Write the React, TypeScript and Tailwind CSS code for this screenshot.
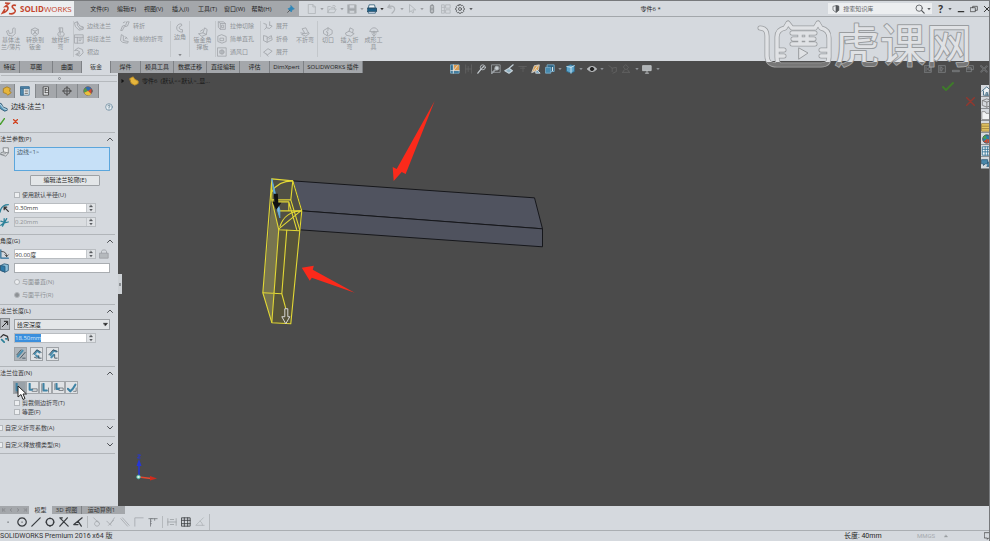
import React from 'react';
import clsx from 'clsx';

type IconProps = { className?: string; children: React.ReactNode };

function Icon({ className = 'w-3 h-3', children }: IconProps) {
  return (
    <svg
      viewBox="0 0 12 12"
      className={clsx('shrink-0', className)}
      fill="none"
      stroke="currentColor"
      strokeLinecap="round"
      strokeLinejoin="round"
      aria-hidden="true"
    >
      {children}
    </svg>
  );
}

const Caret = ({ className = 'text-[#5c5f63]' }: { className?: string }) => (
  <Icon className={clsx('w-1 h-1', className)}>
    <path d="M1 3h10L6 10z" fill="currentColor" stroke="none" />
  </Icon>
);

/* sheet metal commands */
const glyphs: Record<string, React.ReactNode> = {
  base: <path d="M1 5l2-1 1 4 4-1V2l2-1 1 1v6l-3 3-5-1z" />,
  convert: <path d="M2 3l4-2 4 2v5l-4 3-4-3zM2 3l4 2 4-2M6 5v3M4 8l2-2 2 2" />,
  loft: <path d="M4 1h4v5l2 2-1 3H3L2 8l2-2zM4 6h4M5 2v7" />,
  edge: <path d="M1 2l3-1 3 5 4 1v3l-5 1-4-4zM4 1v4l3 4M7 9l4-1" />,
  miter: <path d="M1 1h10v10H1zM1 4h10M4 4v7M6 6h3M6 8h2" />,
  hem: <path d="M1 4l4-3 5 2 1 4-4 4-5-2 5-3-3-2zM4 9l3-1" />,
  jog: <path d="M1 11l2-5 4-1 1-4h3L9 6 5 7l-2 4zM4 2l2-1" />,
  sketch: <path d="M2 1l2 1v6l6 1-1 2-6-1-2-2zM6 3l3 3M6 6l2-2" />,
  corner: <path d="M7 1C4 1 2 3 2 6s3 5 7 5V8C6 8 5 7 5 5l3-2z" />,
  gusset: <path d="M1 8l5-1 2-6 3 2-1 6-5 2zM6 7l4 2M3 5l3-2" />,
  cut: <path d="M2 1h6l2 2v7H4L2 8zM2 1l2 2v7M4 3h6M6 5h2v3H6z" />,
  hole: <path d="M6 1l5 2v6l-5 2-5-2V3zM4 5h4v3H4z" />,
  vent: <path d="M1 1h10v10H1zM6 3v6M3 6h6M4 4h4v4H4z" />,
  unfold: <path d="M1 3l3 1v4l4 1 3-3-3-1M4 8l-2 2M8 1v4" />,
  fold: <path d="M1 2l4 1v7L1 8zM5 5l5-3 1 5-6 3M7 6l2-1" />,
  flatten: <path d="M1 6l5-4 5 3-5 4zM4 9l2 2" />,
  nobend: <path d="M3 2l4-1 2 4 2 3-4 3-5-2 3-2zM1 7l5 1 4-1" />,
  rip: <path d="M1 4l5-3 5 3v4l-5 3-5-3zM6 1v3L4 6l2 1-1 3" />,
  insert: <path d="M1 7l4-2 1-4 4 2-1 4 2 1-4 3-5-1zM5 5l4 2" />,
  form: <path d="M1 5c1-3 3-4 5-4s4 1 5 4zM6 5v6M4 9l2 2 2-2M3 7h6" />,
};

function BigCommand({ icon, lines, className }: { icon: string; lines: string[]; className: string }) {
  return (
    <button className={clsx('flex flex-col items-center pt-[10px] shrink-0', className)}>
      <Icon className="w-[10px] h-[10px] text-[#a1a5a9]">{glyphs[icon]}</Icon>
      {lines.map((line) => (
        <span key={line} className="leading-[7px] whitespace-nowrap">
          {line}
        </span>
      ))}
    </button>
  );
}

function CommandList({ items, className }: { items: [string, string][]; className: string }) {
  return (
    <div className={clsx('flex flex-col justify-between py-1 shrink-0', className)}>
      {items.map(([icon, label], i) => (
        <button key={i} className="flex items-center gap-[3px] h-[10px] whitespace-nowrap">
          <Icon className="w-[10px] h-[10px] text-[#a1a5a9]">{glyphs[icon]}</Icon>
          {label}
        </button>
      ))}
    </div>
  );
}

const menus = ['文件(F)', '编辑(E)', '视图(V)', '插入(I)', '工具(T)', '窗口(W)', '帮助(H)'];

function TitleBar() {
  return (
    <header className="flex items-center h-4 shrink-0 border-b border-[#a3a7ab]">
      <div className="flex items-center w-[74px] h-full bg-[#eceef0] shrink-0 text-[8px] text-[#c4452d]">
        <svg viewBox="0 0 20 16" className="w-5 h-4" fill="none" stroke="#c4452d" strokeWidth="1.6" aria-hidden="true">
          <path d="M5 2l4 .4-3.500 3c4-.6 3.500 4.600-3 6.600L5 8" />
          <path d="M16 4.500c-3-1-5 .5-3 2.500s3.500 3 1 5c-1.500 1-3.500 1-5 .5" />
        </svg>
        <span className="font-bold">SOLID</span>
        <span>WORKS</span>
      </div>
      <nav className="flex items-center w-[225px] h-full pl-3 bg-[#a4a7ab] shrink-0 text-[#222]">
        {menus.map((m) => (
          <button key={m} className="w-[27px] text-center whitespace-nowrap">
            {m}
          </button>
        ))}
        <Icon className="w-2 h-2 ml-3 text-[#2e86b8]">
          <path d="M6 1l5 5-2 .5-2 2-.5 2L1.500 5.500l2-.5 2-2z" fill="currentColor" />
          <path d="M4 8l-3 3" stroke="#333" />
        </Icon>
      </nav>
      <div className="flex items-center pl-2 shrink-0 text-[#b0b4b8]">
        <Tool><path d="M2 .5h5l3 3v8H2zM7 .5v3h3" /></Tool>
        <Tool><path d="M1 10V3h3l1 1h4v2M1 10l2-4h8l-2 4zM7 2c2-1 3 0 3 1" /></Tool>
        <Tool>
          <path d="M1 1h10v10H1z" fill="#a3a7ab" />
          <path d="M3 1h6v4H3zM3 8h6v3H3z" fill="#d5d9de" />
        </Tool>
        <Tool dark>
          <path d="M3 1h6l1 4H2z" fill="#f3f5f6" stroke="#34607a" />
          <path d="M.5 5h11v4H.5z" fill="#1d5f87" stroke="#1d4159" />
          <path d="M2 9h8v2H2z" fill="#eef" stroke="#34607a" />
        </Tool>
        <Tool><path d="M3 1L1 4l4 1M1 4c4-3 9-1 8 3-.5 2-2 3-3 4" strokeWidth="1.500" /></Tool>
        <Tool><path d="M3 1v9l2-2 2 3 1-1-1-3h3z" /></Tool>
        <Icon className="w-[10px] h-[10px] mr-1">
          <rect x="4" y="1" width="4" height="10" rx="2" fill="#a3a7ab" stroke="#8b8f93" />
          <path d="M6 3v1M6 8v1" stroke="#e6e8ea" />
        </Icon>
        <Icon className="w-[10px] h-[10px] mr-1"><path d="M1 1h3v10H1zM6 1h5v4H6zM6 7h5v4H6zM1 4h3M1 8h3" /></Icon>
        <Icon className="w-[10px] h-[10px] mr-1 text-[#505356]">
          <path d="M5 .8h2l.5 1.300 1.500-.5 1.400 1.400-.5 1.500 1.300.5v2l-1.300.5.5 1.500L9 10.400l-1.500-.5-.5 1.300H5l-.5-1.300-1.500.5L1.600 9l.5-1.500L.8 7V5l1.300-.5L1.600 3 3 1.600l1.500.5z" />
          <circle cx="6" cy="6" r="1.800" />
        </Icon>
        <Caret />
      </div>
      <div className="flex-1 text-center text-[#222]">零件6 *</div>
      <label className="flex items-center h-[11px] w-[104px] mr-1.5 pl-1 pr-px bg-[#eceef0] shrink-0">
        <Icon className="w-2 h-2 text-[#55585c]">
          <path d="M2 2l4-1 4 1v6l-4 3-4-3z" />
          <path d="M6 1v10l4-3V2z" fill="currentColor" />
        </Icon>
        <input
          aria-label="搜索知识库"
          placeholder="搜索知识库"
          className="flex-1 min-w-0 pl-[3px] bg-transparent outline-none placeholder:text-[#606366]"
        />
        <Icon className="w-[10px] h-[10px] text-[#55585c]">
          <circle cx="5" cy="5" r="3.800" />
          <path d="M8 8l3 3" strokeWidth="1.500" />
        </Icon>
        <Caret className="ml-[2px] text-[#5c5f63]" />
      </label>
      <div className="flex items-center gap-[5px] shrink-0 text-[#333]">
        <button className="text-[10px] font-bold leading-3">?</button>
        <Caret />
        <Icon className="w-2 h-2"><path d="M2 10h8" strokeWidth="2" /></Icon>
        <Icon className="w-2 h-2"><path d="M1 4h7v6H1zM4 4V2h7v6H8" /></Icon>
        <Icon className="w-2 h-2 -mr-[2px]"><path d="M2 2l8 8M10 2l-8 8" strokeWidth="1.500" /></Icon>
      </div>
    </header>
  );
}

function Tool({ children, dark }: { children: React.ReactNode; dark?: boolean }) {
  return (
    <button className="flex items-center gap-[3px] w-5 h-3">
      <Icon className="w-[10px] h-[10px]">{children}</Icon>
      <Caret className={dark ? 'text-[#333]' : 'text-[#9a9da1]'} />
    </button>
  );
}

const Rule = () => <div className="w-px my-1 bg-[#c3c7cb] shrink-0" />;

function Ribbon() {
  return (
    <div className="flex h-11 shrink-0 text-[#8f9397]">
      <BigCommand icon="base" lines={['基体法', '兰/薄片']} className="w-[22px]" />
      <BigCommand icon="convert" lines={['转换到', '钣金']} className="w-[26px]" />
      <BigCommand icon="loft" lines={['放样折', '弯']} className="w-[25px]" />
      <Rule />
      <CommandList className="w-[46px]" items={[['edge', '边线法兰'], ['miter', '斜接法兰'], ['hem', '褶边']]} />
      <div className="w-[50px] py-1 shrink-0">
        <button className="flex items-center gap-[3px] h-[10px]">
          <Icon className="w-[10px] h-[10px] text-[#a1a5a9]">{glyphs.jog}</Icon>转折
        </button>
        <button className="flex items-center gap-[3px] h-[10px] mt-[3px]">
          <Icon className="w-[10px] h-[10px] text-[#a1a5a9]">{glyphs.sketch}</Icon>绘制的折弯
        </button>
      </div>
      <Rule />
      <button className="flex flex-col items-center w-[18px] pt-[6px] shrink-0">
        <Icon className="w-[10px] h-[10px] text-[#a1a5a9]">{glyphs.corner}</Icon>
        <span className="leading-[8px]">边角</span>
        <Caret className="mt-3 text-[#85888c]" />
      </button>
      <Rule />
      <BigCommand icon="gusset" lines={['钣金角', '撑板']} className="w-[25px]" />
      <Rule />
      <CommandList className="w-[44px] pl-[1px]" items={[['cut', '拉伸切除'], ['hole', '简单直孔'], ['vent', '通风口']]} />
      <Rule />
      <CommandList className="w-[32px] pl-[2px]" items={[['unfold', '展开'], ['fold', '折叠'], ['flatten', '展开']]} />
      <BigCommand icon="nobend" lines={['不折弯']} className="w-[24px]" />
      <Rule />
      <BigCommand icon="rip" lines={['切口']} className="w-[20px]" />
      <BigCommand icon="insert" lines={['插入折', '弯']} className="w-[23px]" />
      <BigCommand icon="form" lines={['成形工', '具']} className="w-[25px]" />
    </div>
  );
}

const ribbonTabs = [
  ['特征', 'w-[20px]'],
  ['草图', 'w-[33px]'],
  ['曲面', 'w-[29px]'],
  ['钣金', 'w-[29px]'],
  ['焊件', 'w-[30px]'],
  ['模具工具', 'w-[33px]'],
  ['数据迁移', 'w-[33px]'],
  ['直接编辑', 'w-[33px]'],
  ['评估', 'w-[30px]'],
  ['DimXpert', 'w-[34px]'],
  ['SOLIDWORKS 插件', 'w-[59px]'],
];

function TabRow() {
  return (
    <div className="flex h-3 shrink-0 bg-[#4b4b4b]">
      {ribbonTabs.map(([label, width]) => (
        <button
          key={label}
          className={clsx(
            'shrink-0 whitespace-nowrap border-r border-[#7e8185]',
            width,
            label === '钣金' ? 'bg-[#d5d9de] text-[#444]' : 'bg-[#a4a7ab] text-[#1f1f1f]'
          )}
        >
          {label}
        </button>
      ))}
      <div className="flex items-center justify-between w-[210px] h-4 ml-[87px] shrink-0 text-[#8b8f93] z-10">
        <Icon className="w-[10px] h-[10px]">
          <path d="M1 1h10v10H1z" fill="#2d6d91" stroke="#7fb1cc" />
          <path d="M4 1h7v7H4z" fill="#d99a4e" stroke="none" />
          <path d="M4 8l5-6M1 8h10M4 1v10" stroke="#e8e8e8" />
        </Icon>
        <Icon className="w-[10px] h-[10px] text-[#636363]"><path d="M2 1v10M2 6h7M9 1v10M5 3v6" /></Icon>
        <Icon className="w-[10px] h-[10px] text-[#c3c9ce]"><circle cx="7" cy="4" r="3" /><path d="M5 6l-4 5M6 5l2-2" strokeWidth="1.500" /></Icon>
        <Icon className="w-[10px] h-[10px] text-[#9ba0a4]"><path d="M1 1h10v9H1z" /><circle cx="7" cy="5" r="2.500" fill="#c5ccd0" /><path d="M5 7l-4 4" strokeWidth="2" /></Icon>
        <Icon className="w-[10px] h-[10px] text-[#c3d0d8]"><path d="M1 8l5-3 4 3-4 3zM6 5l5-4" fill="#8fb0c1" strokeWidth="1.500" /></Icon>
        <Icon className="w-[10px] h-[10px] text-[#626262]"><path d="M1 3h9M6 3v6M3 5h5" /></Icon>
        <Icon className="w-[10px] h-[10px]">
          <path d="M1 10l3-8 6-1-1 6z" fill="#e0a351" stroke="#cfd2d4" />
          <path d="M3 9l5-7M7 7l4 4H6z" fill="#6aa0c0" stroke="#e1e4e6" />
        </Icon>
        <Icon className="w-[10px] h-[10px] text-[#7fb1cc]"><path d="M3 1h8v8H3z" fill="#28607f" /><path d="M1 4h6v7H1z" fill="#478aae" /><path d="M9 4v4" stroke="#fff" /></Icon>
        <Caret className="text-[#8b8f93]" />
        <Icon className="w-[10px] h-[10px]"><path d="M1 3l4-2 5 1v7l-4 2-5-2z" fill="#5fa6cc" stroke="#2d6d91" /><path d="M1 3l5 1 4-2M6 4v7" stroke="#d8e8f0" /></Icon>
        <Caret className="text-[#8b8f93]" />
        <Icon className="w-[10px] h-[10px] text-[#c5c8ca]"><path d="M.5 6C3 2 9 2 11.500 6 9 10 3 10 .5 6z" fill="#aeb2b5" /><circle cx="6" cy="6" r="2" fill="#222" stroke="#222" /></Icon>
        <Caret className="text-[#8b8f93]" />
        <Icon className="w-[10px] h-[10px] text-[#656565]"><path d="M1 2l4 3v4M5 5l5-1v5l-4 2" /></Icon>
        <Icon className="w-[10px] h-[10px] text-[#656565]"><path d="M6 1l3 3-3 3-3-3zM2 10l2-3M10 10L8 7M2 10h8" /></Icon>
        <Caret className="text-[#8b8f93]" />
        <Icon className="w-[10px] h-[10px] text-[#c3c6c8]"><path d="M1 2h10v6H1z" fill="#aeb2b5" /><path d="M4 11h4M6 8v3" /></Icon>
        <Caret className="text-[#8b8f93]" />
      </div>
      <div className="flex items-center justify-end flex-1 gap-[6px] h-4 pr-[1px] text-[#8b8e91] z-10">
        <Icon className="w-2 h-2"><path d="M1 1h10v10H1zM9 3L5 6l4 3zM3 3v6" /></Icon>
        <Icon className="w-2 h-2"><path d="M1 1h10v10H1zM5 3l3 3-3 3zM3 3v6" /></Icon>
        <Icon className="w-2 h-2"><path d="M1 8h10v2H1z" /></Icon>
        <Icon className="w-2 h-2"><path d="M1 4h7v6H1zM4 4V1h7v6H8M1 6h7" /></Icon>
        <Icon className="w-2 h-2"><path d="M2 1l4 4 4-4 1 1-4 4 4 4-1 1-4-4-4 4-1-1 4-4-4-4z" /></Icon>
      </div>
    </div>
  );
}

function Section({ title, open = true, className, children }: { title: string; open?: boolean; className?: string; children?: React.ReactNode }) {
  return (
    <section className="mr-[3px] border-t border-[#b1b5b9]">
      <h3 className={clsx('flex items-center justify-between pr-[2px] text-[#333]', open ? 'h-3' : 'h-4')}>
        {open ? title : <Tick label={title} />}
        <Icon className="w-[6px] h-[6px] text-[#4c4f53]">
          <path d={open ? 'M1 9l5-5 5 5' : 'M1 3l5 5 5-5'} strokeWidth="2" />
        </Icon>
      </h3>
      {open && <div className={clsx('flex flex-col gap-1 pt-[2px]', className)}>{children}</div>}
    </section>
  );
}

function Tick({ label, type = 'checkbox', checked, muted }: { label: string; type?: 'checkbox' | 'radio'; checked?: boolean; muted?: boolean }) {
  return (
    <label className={clsx('flex items-center gap-[2px] h-[9px] whitespace-nowrap', muted ? 'text-[#8d9195]' : 'text-[#3d4043]')}>
      <input
        type={type}
        name={type === 'radio' ? 'angle' : undefined}
        disabled={muted}
        defaultChecked={checked}
        className={clsx(
          'appearance-none w-[6px] h-[6px] border border-[#b3b7bb] bg-[#eceef0] shrink-0 checked:bg-[#8d9195]',
          type === 'radio' && 'rounded-full'
        )}
      />
      {label}
    </label>
  );
}

function Spin({ label, value, icon, muted, selected, after }: {
  label: string;
  value: string;
  icon: React.ReactNode;
  muted?: boolean;
  selected?: boolean;
  after?: React.ReactNode;
}) {
  return (
    <div className="flex items-center h-[10px]">
      <div className="w-[14px] shrink-0">{icon}</div>
      <div className={clsx('flex items-center w-[82px] h-full border border-[#b9bdc1]', muted ? 'bg-[#dadde0]' : 'bg-white')}>
        {selected && <span className="h-full bg-[#3b8fdd] text-[#dcebfa] leading-[8px]">{value}</span>}
        <input
          aria-label={label}
          defaultValue={selected ? '' : value}
          disabled={muted}
          className={clsx('flex-1 min-w-0 h-full outline-none bg-transparent', muted ? 'text-[#8d9195]' : 'text-[#333]')}
        />
        <span className="flex flex-col justify-center w-[9px] h-full bg-[#dfe2e5] border-l border-[#c3c7cb]">
          <button aria-label="增加" className="flex justify-center h-1">
            <Icon className="w-1 h-1 text-[#55585c]"><path d="M1 9h10L6 3z" fill="currentColor" /></Icon>
          </button>
          <button aria-label="减少" className="flex justify-center h-1">
            <Caret />
          </button>
        </span>
      </div>
      {after}
    </div>
  );
}

/* [flange profile, reference line] */
const bendShapes = [
  ['M2 1v8h5', 'M1 11h10'],
  ['M2 1v7h3', 'M5 7h6v3H5'],
  ['M3 1v8h4', 'M9 6v5M1 1v10'],
  ['M3 1v6h3', 'M6 6h5v3H6M1 1v7'],
  ['M1 7l3 3 3-3 3-5', 'M8 10h3V6'],
];

const lengthShapes = [
  ['M2 9l6-7', 'M1 7l5-6M5 11l6-7M8 11h3'],
  ['M3 6l3-4 3 2M5 8l3 2', 'M1 6l5-5 5 3M3 10l3 1M8 8v3h3'],
  ['M3 7l4-5 3 1M7 7l-3 3', 'M1 7l5-6 5 2M8 7v4h3'],
];

function PropertyPanel() {
  return (
    <aside className="w-[118px] shrink-0 bg-[#d5d9de] overflow-hidden">
      <div className="flex items-center justify-center h-[11px] px-px">
        <div className="flex items-center justify-center w-full h-[7px] border-y border-[#b5b9bd]">
          <span className="block w-[3px] h-[3px] rounded-full border border-[#8b8f93]" />
        </div>
      </div>
      <div className="flex h-3.5 text-[#444]">
        <PanelTab><path d="M2 3l4-2 4 2-1 3 2 2-4 3-2-2-3-1z" fill="#e6b53c" stroke="#a77b1c" /></PanelTab>
        <PanelTab active>
          <path d="M1 1h10v10H1z" fill="#f2f5f7" stroke="#3e6f91" />
          <path d="M1 1h10v2H1zM1 3h3v8H1z" fill="#5089ad" stroke="#3e6f91" />
          <path d="M6 5h3M6 7h3M6 9h3" stroke="#666" />
        </PanelTab>
        <PanelTab><path d="M3 1h6v10H3zM5 3v5M5 5h3M5 8h3M5 3h2" fill="#e8eaec" /></PanelTab>
        <PanelTab><circle cx="6" cy="6" r="4" /><path d="M6 0v12M0 6h12" /></PanelTab>
        <PanelTab>
          <circle cx="6" cy="6" r="5" fill="#d14a35" stroke="#555" />
          <path d="M6 6L1.500 8A5 5 0 0 1 3 2z" fill="#4f9d4a" stroke="none" />
          <path d="M6 6L3 2a5 5 0 0 1 7 1z" fill="#2f6fb0" stroke="none" />
          <path d="M6 6l4 3.500A5 5 0 0 1 1.500 8z" fill="#e8c23c" stroke="none" />
        </PanelTab>
      </div>
      <div className="flex items-center h-[18px] pr-[5px] text-[7px] text-[#222]">
        <Icon className="w-2.5 h-2.5 -ml-[2px] mr-[3px]">
          <path d="M1 1l3 1 2 4 5 2v2l-3 1-5-3z" fill="#5c9dc0" stroke="#2b5570" />
          <path d="M3 3l4 5 3 1" stroke="#dcebf3" />
        </Icon>
        <h2 className="flex-1">边线-法兰1</h2>
        <Icon className="w-2 h-2 text-[#5d7f96]">
          <circle cx="6" cy="6" r="5" fill="#e6edf1" />
          <path d="M4.500 4.500c0-2 3-2 3 0 0 1-1.500 1-1.500 2.500M6 9v.2" stroke="#33566d" />
        </Icon>
      </div>
      <div className="flex items-center gap-2 h-2.5 mb-[6px]">
        <button aria-label="确定">
          <Icon className="w-[7px] h-[7px] -ml-[2px] text-[#4aa02f]"><path d="M1 7l3 4 7-10" strokeWidth="2.500" /></Icon>
        </button>
        <button aria-label="取消">
          <Icon className="w-[5px] h-[5px] text-[#d1421f]"><path d="M1 1l10 10M11 1L1 11" strokeWidth="3" /></Icon>
        </button>
      </div>

      <Section title="法兰参数(P)" className="pb-[7px]">
        <div className="flex">
          <Icon className="w-2.5 h-2.5 mr-1 text-[#7b7f83]"><path d="M4 1h6v6L7 11 1 9V7l3-1z" fill="#eceef0" /><path d="M4 6l6 1M1 9l6-1" /></Icon>
          <textarea
            aria-label="边线"
            defaultValue="边线<1>"
            className="w-[96px] h-6 px-[2px] resize-none outline-none overflow-hidden border border-[#5ba6dc] bg-[#c6e0f7] text-[#4a5a68] leading-[9px]"
          />
        </div>
        <button className="w-[70px] h-[11px] ml-[30px] rounded-[1px] border border-[#9da1a5] bg-[#e3e6e8] text-[#222] leading-[9px]">
          编辑法兰轮廓(E)
        </button>
        <div className="pl-[14px]"><Tick label="使用默认半径(U)" /></div>
        <Spin label="折弯半径" value="0.30mm" icon={<Icon className="w-2.5 h-2.5 text-[#333]"><path d="M0 11C1 5 4 2 10 2" stroke="#2c8199" strokeWidth="1.500" /><path d="M10 10L5 5M5 5h3M5 5v3" strokeWidth="1.500" /></Icon>} />
        <Spin label="缝隙距离" value="0.20mm" muted icon={<Icon className="w-2.5 h-2.5 text-[#2c8199]"><path d="M1 10l4-3V2M5 7l5-1M8 2L3 11M1 5l3 1" strokeWidth="1.500" /></Icon>} />
      </Section>

      <Section title="角度(G)" className="pb-[5px]">
        <Spin
          label="法兰角度"
          value="90.00度"
          icon={<Icon className="w-2.5 h-2.5 text-[#333]"><path d="M1 1v10h9" stroke="#2c6f99" strokeWidth="1.500" /><path d="M2 3c4 0 6 2 6 6M6 7l2 2 2-2" /></Icon>}
          after={
            <Icon className="w-2.5 h-2.5 ml-[3px] text-[#9a9ea2]"><path d="M3 5V3c0-2.500 6-2.500 6 0v2" /><path d="M1 5h10v6H1z" fill="#b5b9bd" /></Icon>
          }
        />
        <div className="flex items-center h-[10px]">
          <Icon className="w-2.5 h-2.5 mr-1"><path d="M1 3l4-2 5 1v7l-4 2-5-2z" fill="#8cc0dc" stroke="#2d5a78" /><path d="M1 3l5 1v7l-5-2z" fill="#2d7aa8" stroke="#2d5a78" /></Icon>
          <input aria-label="选择面" className="w-[96px] h-full border border-[#a9adb1] bg-white outline-none" />
        </div>
        <div className="pl-[14px]"><Tick type="radio" label="与面垂直(N)" muted /></div>
        <div className="pl-[14px]"><Tick type="radio" label="与面平行(R)" muted checked /></div>
      </Section>

      <Section title="法兰长度(L)" className="pb-[5px]">
        <div className="flex items-center h-[10px]">
          <button aria-label="反向" className="flex items-center justify-center w-[10px] h-3 mr-1 border border-[#85898d] bg-[#b9bec3] shrink-0">
            <Icon className="w-2 h-2 text-[#222]"><path d="M2 10l7-7M5 2h5v5" strokeWidth="1.500" /></Icon>
          </button>
          <div className="relative w-[96px] h-full">
            <select aria-label="长度终止条件" className="block w-full h-[11px] px-[2px] appearance-none border border-[#9da1a5] bg-[#e3e6e8] text-[#222] leading-[8px]">
              <option>给定深度</option>
            </select>
            <span className="absolute right-[2px] top-[3px] flex pointer-events-none">
              <Icon className="w-[5px] h-[5px] text-[#222]"><path d="M1 3h10L6 9z" fill="currentColor" /></Icon>
            </span>
          </div>
        </div>
        <Spin label="长度" value="18.50mm" selected icon={<Icon className="w-2.5 h-2.5 text-[#333]"><path d="M1 5l3-3 5 2 1 5" strokeWidth="1.500" /><path d="M2 8l3 3M7 7h1" stroke="#2c8199" strokeWidth="2" /></Icon>} />
        <div className="flex gap-[3px] pl-[14px]">
          {lengthShapes.map(([bar, line], i) => (
            <button
              key={bar}
              aria-label={`长度方式${i + 1}`}
              className={clsx('flex items-center justify-center w-[13px] h-3.5 border border-[#9ea2a6]', i === 0 ? 'bg-[#aeb5bb]' : 'bg-[#dfe2e5]')}
            >
              <Icon className="w-2.5 h-2.5">
                <path d={bar} stroke="#4b8eae" strokeWidth="2.500" />
                <path d={line} stroke="#3a4c58" />
              </Icon>
            </button>
          ))}
        </div>
      </Section>

      <Section title="法兰位置(N)" className="pb-[3px]">
        <div className="relative flex pl-[13px]">
          {bendShapes.map(([bar, line], i) => (
            <button
              key={bar}
              aria-label={`法兰位置${i + 1}`}
              className={clsx('flex items-center justify-center w-[13px] h-[13px] border border-[#a3a7ab]', i === 0 ? 'bg-[#99a1a8]' : 'bg-[#dfe2e5]')}
            >
              <Icon className="w-2.5 h-2.5">
                <path d={bar} stroke="#3f83a5" strokeWidth="2.500" />
                <path d={line} stroke="#6d7378" />
              </Icon>
            </button>
          ))}
          {/* mouse pointer */}
          <svg viewBox="0 0 10 16" className="absolute left-[17px] top-1 w-[10px] h-4 z-10" aria-hidden="true">
            <path d="M1 1v11l3-2.500 2 5 2-1-2-4.500h3.500z" fill="#fff" stroke="#222" />
          </svg>
        </div>
        <div className="pl-[14px]">
          <Tick label="剪裁侧边折弯(T)" />
          <Tick label="等距(F)" />
        </div>
      </Section>
      <div className="-ml-[3px]">
        <Section title="自定义折弯系数(A)" open={false} />
        <Section title="自定义释放槽类型(R)" open={false} />
        <div className="mr-[3px] border-t border-[#b1b5b9]" />
      </div>
    </aside>
  );
}

function PanelTab({ active, children }: { active?: boolean; children: React.ReactNode }) {
  return (
    <button
      className={clsx(
        'flex items-center justify-center w-[21px] border-r border-[#85898d] first:w-[15px]',
        active ? 'bg-[#d5d9de]' : 'bg-[#a4a7ab]'
      )}
    >
      <Icon className="w-2.5 h-2.5">{children}</Icon>
    </button>
  );
}

function Model() {
  return (
    <svg viewBox="118 73 872 433" preserveAspectRatio="xMinYMin meet" className="absolute inset-0 w-full h-full" fill="none" aria-hidden="true">
      <g stroke="#16171b" strokeWidth="1" strokeLinejoin="round">
        <path d="M293 181l242 17 8 31-241-18z" fill="#50535f" />
        <path d="M302 211l241 18v18l-243-17z" fill="#4f525e" />
      </g>
      <path d="M272 200l-9 93 9 30 7-94z" fill="#77744f" />
      <path d="M279 229l-7 94 19 1 9-94z" fill="#57543a" />
      <path d="M272 179l21 2 9 30-2 19-21-1-7-30z" fill="#53543f" fillOpacity=".6" />
      <g stroke="#e2d835" strokeWidth="1.100" strokeLinejoin="round">
        <path d="M272 179l21 2 9 30-2 20-21-1-7-30zM272 179l-9 114 9 30 19 1 9-93" />
        <path d="M279 229l-7 94M263 293l19 1 4 15M282 294l5-64" />
        <path d="M272 200h19l2-19M291 200l9 30M274 202h15l8 28M279 211l23 0M279 229l22-18M289 202v9" />
        <path d="M272 192c4-7 12-11 21-11M280 227c3-10 11-16 22-16" />
      </g>
      <path d="M272 179l5 21 3 10v8l-4-13z" fill="#86b9da" stroke="#5da9db" />
      <path d="M274 194h4l.5 9h3l-5 7-4-8h2z" fill="#111" />
      <path d="M285 309h3v8h2l-4 7-4-7h3z" stroke="#d6d6d6" />
      <g fill="#fb2a1b">
        <path d="M435 101l-29 73-4-2-8 9-1-14 4 2z" />
        <path d="M302 268l12-2-1 4 42 23-43-15-2 3z" />
      </g>
    </svg>
  );
}

function Viewport() {
  return (
    <main className="relative flex-1 min-w-0 bg-[#4b4b4b]">
      <Model />
      <div className="relative flex items-center h-4 pl-[3px] text-[#161616]">
        <Icon className="w-1 h-1"><path d="M2 1l7 5-7 5z" fill="currentColor" /></Icon>
        <Icon className="w-2.5 h-2.5 ml-1 mr-[3px]"><path d="M1 3l4-2 2 3 4 2v3l-4 2-4-2z" fill="#e6b53c" stroke="#b98b25" /></Icon>
        <span className="whitespace-pre">零件6  (默认&lt;&lt;默认&gt;_显...</span>
      </div>
      <div className="absolute left-0 top-[201px] w-1 h-5 bg-[#cdd1d5] flex items-center justify-center">
        <span className="w-[2px] h-[3px] border border-[#8b8f93]" />
      </div>
      {/* confirmation corner */}
      <div className="absolute right-[14px] top-2 flex gap-3">
        <Icon className="w-3 h-3 text-[#3f7a2b]"><path d="M1 6l3 3 7-7" strokeWidth="2" /></Icon>
        <Icon className="w-[9px] h-[9px] mt-4 text-[#91382f]"><path d="M1 1l10 10M11 1L1 11" strokeWidth="2" /></Icon>
      </div>
      <TaskPane />
      <svg viewBox="0 0 24 28" className="absolute left-4 bottom-6 w-6 h-7" fill="none" aria-hidden="true">
        <path d="M5 23V8" stroke="#2536d8" strokeWidth="1.500" />
        <path d="M2.500 12L5 5l2.500 7z" fill="#2536d8" />
        <path d="M3.500 1h3l-3 3h3" stroke="#2536d8" />
        <path d="M5 23l12 1.500" stroke="#e8482e" strokeWidth="1.500" />
        <path d="M16 22l7 2.500-7 2z" fill="#cf2c1d" />
        <circle cx="4.500" cy="23" r="1.800" fill="#dff5e4" stroke="#4bb1a0" />
      </svg>
    </main>
  );
}

function TaskPane() {
  return (
    <div className="absolute right-0 top-3 flex flex-col w-2 overflow-hidden bg-[#d5d9de]">
      {[
        <path d="M1 6l6-5 5 5M3 6v5h7V6M6 11V8h2v3" fill="#eef2f4" stroke="#34607a" />,
        <path d="M2 3l5-2 5 2v6l-5 2-5-2zM2 3l5 2 5-2M7 5v6" stroke="#777" />,
        <path d="M1 11V2h4l1 2h6v7z" fill="#f1f3f4" stroke="#888" />,
        <path d="M1 2h11v9H1zM1 5h11M1 8h11" fill="#e4c665" stroke="#967833" />,
        <g><circle cx="7" cy="6" r="5" fill="#2e7fa8" stroke="#444" /><path d="M7 6l5 1-3 4zM7 6L3 9l5 2z" fill="#cf4b31" stroke="none" /><path d="M7 6L5 1 2 5z" fill="#4ca24a" stroke="none" /></g>,
        <path d="M2 1h10v10H2zM2 4h10M2 7h10M5 1v10M8 1v10" fill="#f1f5f8" stroke="#2d6d91" />,
        <path d="M1 2h7v5H5L3 9V7H1zM8 5h4v5H7" fill="#4987aa" stroke="#2d5a78" />,
      ].map((shape, i) => (
        <button key={i} className="h-[12px] py-px border-b border-[#8b8f93]">
          <Icon className="w-2.5 h-2.5">{shape}</Icon>
        </button>
      ))}
    </div>
  );
}

const sketchTools = [
  'M6 6h.1',
  'M6 1a5 5 0 1 0 .1 0zM6 6h.1',
  'M1 11L11 1',
  'M6 1.500a4.500 4.500 0 1 0 .1 0zM6 1v1M6 10.500v1M1 6h1M10 6h1',
  'M1 1l10 10M10 1L1 11M1 1h3',
  'M11 1L1 9h5M6 5l4 6',
];
const relationTools = ['M2 1l7 7M6 5a3 3 0 1 0 .1 0z', 'M1 5l5 5M10 1L5 9M3 10l6-6', 'M1 2l8 9M3 1l8 9', 'M1 11V1h10', 'M3 11V2h8M1 2h4M3 5h1M3 8h1M8 2v2'];

function BottomBars() {
  return (
    <footer className="shrink-0 bg-[#d5d9de] text-[#333]">
      <div className="flex h-2 leading-[8px]">
        <div className="flex items-center justify-around w-[29px] bg-[#a4a7ab] text-[#7e8185]">
          {['M9 2L4 6l5 4M2 2v8', 'M8 2L3 6l5 4', 'M4 2l5 4-5 4', 'M3 2l5 4-5 4M10 2v8'].map((d) => (
            <Icon key={d} className="w-1 h-1"><path d={d} strokeWidth="2" /></Icon>
          ))}
        </div>
        <button className="w-[23px] text-center">模型</button>
        <button className="w-[30px] bg-[#a4a7ab] border-r border-[#7e8185]">3D 视图</button>
        <button className="w-[43px] pr-1 bg-[#a4a7ab]">运动算例1</button>
      </div>
      <div className="flex items-center h-[17px] pl-[3px] gap-1 border-b border-[#aaaeb2]">
        {sketchTools.map((d) => (
          <button key={d} className="text-[#393c40]">
            <Icon className="w-2.5 h-2.5"><path d={d} strokeWidth="1.500" /></Icon>
          </button>
        ))}
        <div className="w-px h-3 bg-[#b5b9bd]" />
        {relationTools.map((d, i) => (
          <button key={d} className={i === 4 ? 'text-[#777b7f]' : 'text-[#a6aaae]'}>
            <Icon className="w-2.5 h-2.5"><path d={d} /></Icon>
          </button>
        ))}
        <div className="w-px h-3 bg-[#b5b9bd]" />
        <Icon className="w-2.5 h-2.5 text-[#9ea2a6]"><path d="M1 2v8M11 2v8M1 6h10M4 3h4M4 9h4" /></Icon>
        <Icon className="w-2.5 h-2.5 text-[#393c40]"><path d="M1 1h10v10H1zM1 4h10M1 8h10M4 1v10M8 1v10" /></Icon>
        <Icon className="w-2.5 h-2.5 text-[#b0b4b8]"><path d="M10 1L1 10h10M6 5c2 1 3 3 3 5" /></Icon>
        <div className="w-px h-4 bg-[#b5b9bd]" />
      </div>
      <div className="flex items-center h-[10px] font-['Roboto','Noto_Sans_CJK_SC',sans-serif]">
        <span className="flex-1 text-[7px] whitespace-nowrap">SOLIDWORKS Premium 2016 x64 版</span>
        <span className="w-[73px] text-[7px] text-[#222]">长度: 40mm</span>
        <span className="w-[27px] text-[#a6aaae]">MMGS</span>
        <Icon className="w-1 h-1 mr-9 text-[#9a9da1]"><path d="M1 9h10L6 3z" fill="currentColor" /></Icon>
        <Icon className="w-2 h-2 -mr-[3px]"><path d="M1 1h10v8H7l-2 2V9H1z" /></Icon>
      </div>
    </footer>
  );
}

const catStrokes = [
  'M3 9c5 0 7 3 7 8v20c0 6 4 9 10 9h44c6 0 8-3 8-8V19c0-6-3-9-8-10l-3-5-3 5H35l-4-5-3 5c-5 1-8 4-8 9v20c0 4 1 7 3 8',
  'M35 14h23M36 20h21M43 14v11M50 14v11M35 25h23',
  'M21 31h6M21 37h6M64 31h7M64 37h7',
];

function Watermark() {
  return (
    <svg viewBox="0 0 216 52" className="absolute right-4 top-[18px] w-[216px] h-[52px] z-20 pointer-events-none" fill="none" strokeLinecap="round" strokeLinejoin="round">
      <defs>
        <linearGradient id="edge" gradientUnits="userSpaceOnUse" x1="0" y1="0" x2="0" y2="52">
          <stop offset=".827" stopColor="#9a9da0" />
          <stop offset=".827" stopColor="#a3a3a3" />
        </linearGradient>
        <linearGradient id="body" gradientUnits="userSpaceOnUse" x1="0" y1="0" x2="0" y2="52">
          <stop offset=".827" stopColor="#e0e2e5" />
          <stop offset=".827" stopColor="#777" />
        </linearGradient>
      </defs>
      {catStrokes.map((d) => <path key={d} d={d} stroke="url(#edge)" strokeWidth="5" />)}
      {catStrokes.map((d) => <path key={d} d={d} stroke="url(#body)" strokeWidth="3.500" />)}
      <path d="M42 29l9 5-9 6z" fill="#e0e2e5" stroke="#9a9da0" />
      <text
        x="77"
        y="43"
        fontSize="46"
        fontWeight="400"
        fill="url(#body)"
        stroke="url(#edge)"
        strokeWidth="2"
        className="font-['Noto_Sans_CJK_SC',sans-serif] [paint-order:stroke]"
      >
        虎课网
      </text>
    </svg>
  );
}

export default function App() {
  return (
    <div className="relative flex flex-col h-screen overflow-hidden border-t border-r border-[#77797c] bg-[#d5d9de] text-[6px] leading-[8px] font-['Open_Sans','Noto_Sans_CJK_SC',sans-serif]">
      <TitleBar />
      <Ribbon />
      <TabRow />
      <div className="flex flex-1 min-h-0">
        <PropertyPanel />
        <Viewport />
      </div>
      <BottomBars />
      <Watermark />
    </div>
  );
}
